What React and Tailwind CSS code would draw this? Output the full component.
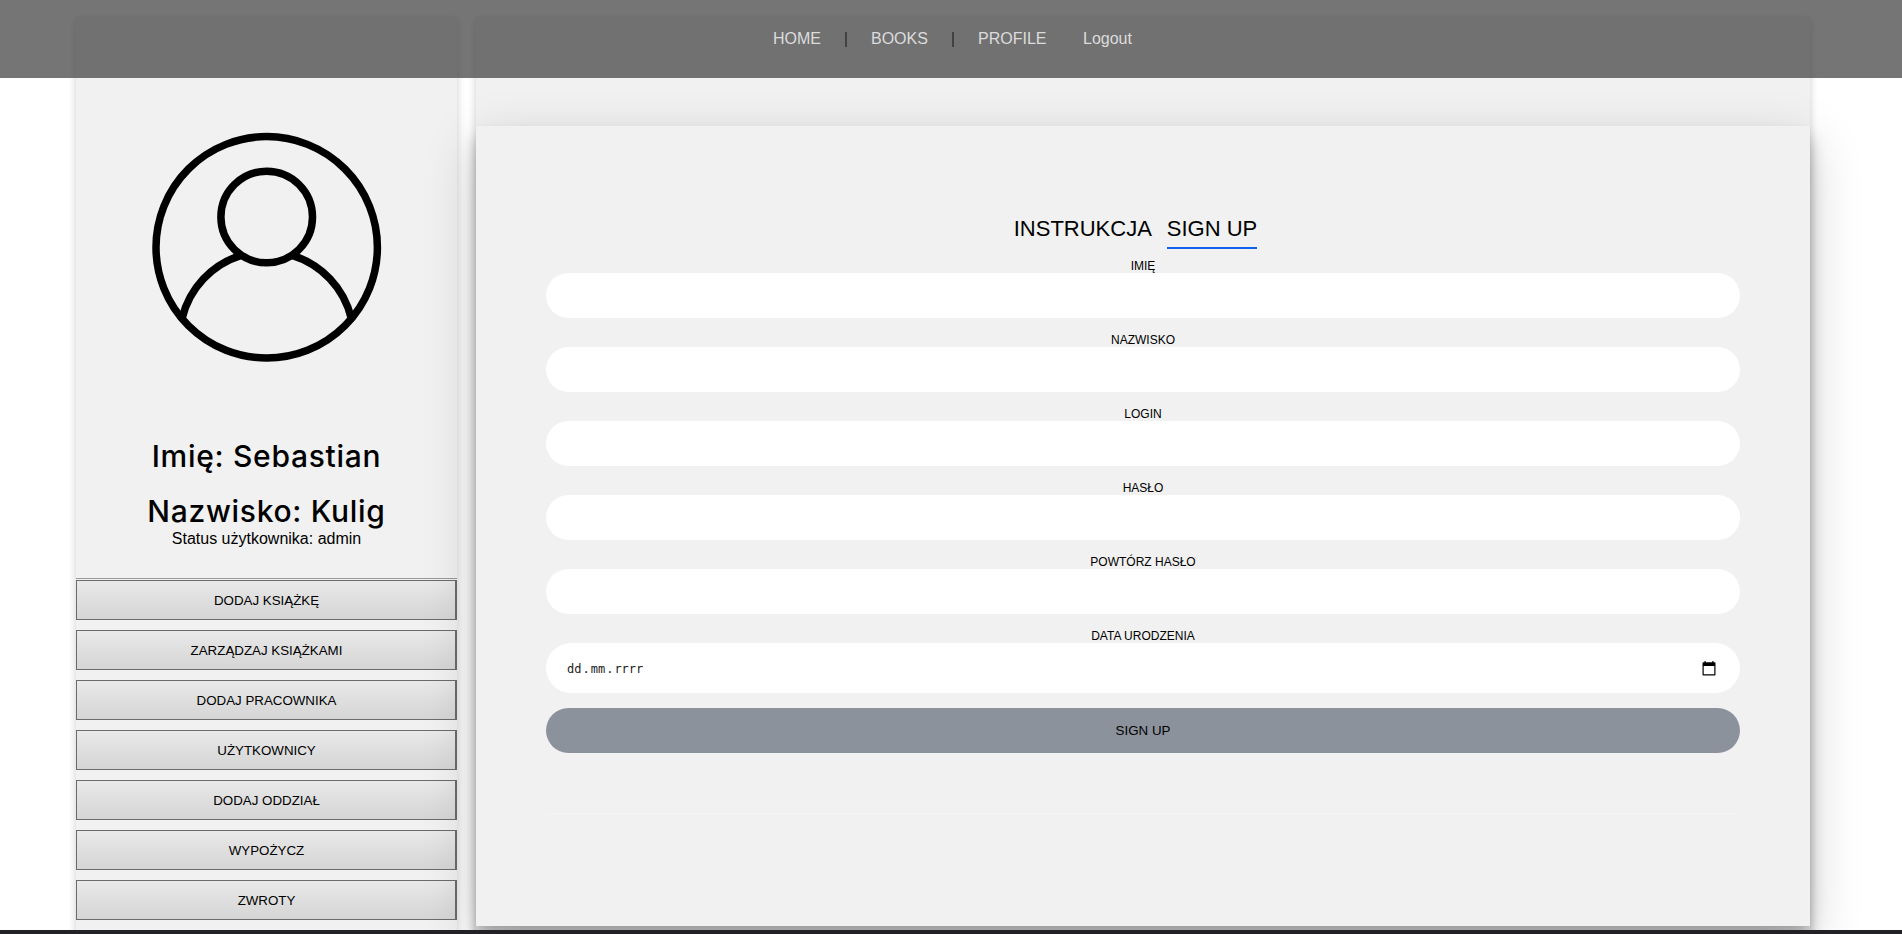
const menu = [
  'DODAJ KSIĄŻKĘ',
  'ZARZĄDZAJ KSIĄŻKAMI',
  'DODAJ PRACOWNIKA',
  'UŻYTKOWNICY',
  'DODAJ ODDZIAŁ',
  'WYPOŻYCZ',
  'ZWROTY',
];

const fields = ['IMIĘ', 'NAZWISKO', 'LOGIN', 'HASŁO', 'POWTÓRZ HASŁO'];

function Avatar() {
  return (
    <svg className="h-[230px] w-[230px]" viewBox="0.3 0 230 230" fill="none" stroke="#000" strokeWidth="7.5">
      <circle cx="115" cy="115.3" r="110.7" />
      <circle cx="115" cy="85" r="45.8" />
      <path d="M30.5 186A87 87 0 0 1 89.5 123.3" />
      <path d="M199.5 186A87 87 0 0 0 140.5 123.3" />
    </svg>
  );
}

function Header() {
  return (
    <header className="absolute inset-x-0 top-0 z-20 flex h-[78px] bg-[#3a3a3a]/70 pl-[773px] pt-[30px] text-base leading-[18px] text-[#dcdcdc]">
      <a className="w-[48px]">HOME</a>
      <span className="w-[50px] pl-[24px] pt-[2px]"><span className="block h-[15px] w-[2px] bg-[#424242]" /></span>
      <a className="w-[57px]">BOOKS</a>
      <span className="w-[50px] pl-[24px] pt-[2px]"><span className="block h-[15px] w-[2px] bg-[#424242]" /></span>
      <a className="w-[105px]">PROFILE</a>
      <a>Logout</a>
    </header>
  );
}

function Sidebar() {
  return (
    <aside className="flex h-[930px] w-[381px] shrink-0 flex-col items-center bg-[#f1f1f1] pt-[116px] text-black shadow-[0_4px_8px_0_rgba(0,0,0,0.2)]">
      <Avatar />
      <h1 className="mt-[74px] font-[Inter,sans-serif] text-[30px] font-medium leading-[40px] tracking-[0.7px]">Imię: Sebastian</h1>
      <h1 className="mt-[15px] font-[Inter,sans-serif] text-[30px] font-medium leading-[40px] tracking-[0.7px]">Nazwisko: Kulig</h1>
      <p className="-mt-px text-base leading-[18px]">Status użytkownika: admin</p>
      <div className="mt-[30px] h-px w-full bg-[#999]" />
      <nav className="mt-px flex w-full flex-col gap-[10px]">
        {menu.map((item) => (
          <button key={item} className="h-[40px] w-full border border-r-2 border-[#6b6b6b] bg-linear-to-b from-[#e9e9e9] to-[#d5d5d5] pl-px text-[13.333px] leading-[15px]">
            {item}
          </button>
        ))}
      </nav>
    </aside>
  );
}

function SignUp() {
  return (
    <section className="h-[800px] bg-[#f1f1f1] px-[70px] pt-[90px] text-black shadow-[0_12px_15px_0_rgba(0,0,0,0.24),0_17px_50px_0_rgba(0,0,0,0.19)]">
      <div className="flex h-[33px] justify-center gap-[15px] pr-[15px] text-[22px] leading-[25px]">
        <span>INSTRUKCJA</span>
        <span className="border-b-2 border-[#1161ee]">SIGN UP</span>
      </div>
      <form className="mt-[10px] flex flex-col text-xs leading-[14px]">
        {fields.map((label) => (
          <label key={label} className="mb-[15px] block text-center">
            {label}
            <input className="block h-[45px] w-full rounded-[25px] bg-white px-5" />
          </label>
        ))}
        <span className="text-center">DATA URODZENIA</span>
        <div className="flex h-[50px] items-center justify-between rounded-[25px] bg-white pl-[21px] pr-[24px] font-['DejaVu_Sans_Mono',monospace]">
          <span className="flex gap-px pt-[2px] text-[12px] text-[#222]">
            <span>dd</span><span>.</span><span>mm</span><span>.</span><span>rrrr</span>
          </span>
          <svg className="h-[15px] w-[14px]" viewBox="0 0 14 15">
            <path fill="#000" fillRule="evenodd" d="M2.5 0h1.2v1.2h6.6V0h1.2v1.2h1.2q.8 0 .8.8v11.5q0 .9-.8.9H1.3q-.8 0-.8-.9V2q0-.8.8-.8h1.2zM1.7 5v8.2h10.6V5z" />
          </svg>
        </div>
        <button className="mt-[15px] h-[45px] rounded-[25px] bg-[#8b929c] text-[13.333px]">SIGN UP</button>
      </form>
      <div className="mt-[60px] h-[2px] bg-white/20" />
    </section>
  );
}

export default function App() {
  return (
    <div className="relative flex h-[934px] w-[1902px] flex-col overflow-hidden bg-white font-['Liberation_Sans',Arial,sans-serif]">
      <Header />
      <main className="flex h-[930px] shrink-0 gap-[19px] overflow-hidden pl-[76px] pt-[16px]">
        <Sidebar />
        <div className="h-[930px] w-[1334px] shrink-0 bg-[#f1f1f1] pt-[110px] shadow-[0_4px_8px_0_rgba(0,0,0,0.2)]">
          <SignUp />
        </div>
      </main>
      <footer className="h-[4px] bg-[#222226]" />
    </div>
  );
}
